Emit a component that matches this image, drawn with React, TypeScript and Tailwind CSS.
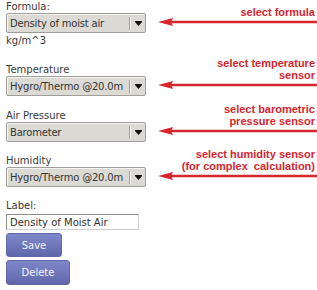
import React from "react";

const RED = "#d7262e";

function Arrow() {
  return (
    <svg width="159" height="8" viewBox="0 0 159 8" className="block shrink-0">
      <line x1="12" y1="4" x2="159" y2="4" stroke={RED} strokeWidth="2.6" />
      <polygon points="0,4 15,0 13,4 15,8" fill={RED} />
    </svg>
  );
}

function Select({ value }: { value: string }) {
  return (
    <div className="flex h-[20px] w-[140px] items-center rounded-[2px] border border-[#9f9e9a] bg-[#dcdad5] shadow-[inset_1px_1px_0_#f5f4f2]">
      <span className="flex-1 overflow-hidden whitespace-nowrap pl-[3px] text-[10px] leading-[13px] tracking-[-0.2px] text-[#333]">
        {value}
      </span>
      <div className="h-[13px] w-px shrink-0 bg-[#9f9e9a]" />
      <div className="h-[13px] w-px shrink-0 bg-[#f5f4f2]" />
      <div className="flex w-[14px] shrink-0 items-center justify-center">
        <svg width="7" height="5" viewBox="0 0 7 5" className="block">
          <rect x="0" y="0" width="7" height="1" fill="#111" />
          <polygon points="0,1 7,1 3.5,5" fill="#111" />
        </svg>
      </div>
    </div>
  );
}

function Note({ lines }: { lines: string[] }) {
  return (
    <div className="ml-[12px] flex h-[33px] w-[159px] flex-col justify-end pb-[7px]">
      {lines.map((l) => (
        <div
          key={l}
          className="shrink-0 pr-[2px] text-right text-[11px] font-bold leading-[12px] whitespace-pre"
          style={{ color: RED, fontFamily: '"Liberation Sans", Arial, sans-serif' }}
        >
          {l}
        </div>
      ))}
      <Arrow />
    </div>
  );
}

function Group({ label, value, note, className }: { label: string; value: string; note: string[]; className?: string }) {
  return (
    <div className={"flex items-start " + (className ?? "")}>
      <div className="w-[140px]">
        <div className="h-[13px] text-[10px] leading-[13px] text-[#3a3a3a]">{label}</div>
        <Select value={value} />
      </div>
      <Note lines={note} />
    </div>
  );
}

export default function App() {
  return (
    <div
      className="h-[290px] w-[317px] overflow-hidden bg-white pl-[6px]"
      style={{ fontFamily: '"DejaVu Sans", Verdana, sans-serif' }}
    >
      <Group label="Formula:" value="Density of moist air" note={["select formula"]} />
      <div className="mt-[1px] h-[13px] text-[10px] leading-[13px] text-[#3a3a3a]">kg/m^3</div>
      <Group
        className="mt-[16px]"
        label="Temperature"
        value="Hygro/Thermo @20.0m"
        note={["select temperature", "sensor"]}
      />
      <Group
        className="mt-[13px]"
        label="Air Pressure"
        value="Barometer"
        note={["select barometric", "pressure sensor"]}
      />
      <Group
        className="mt-[12px]"
        label="Humidity"
        value="Hygro/Thermo @20.0m"
        note={["select humidity sensor", "(for complex  calculation)"]}
      />
      <div className="mt-[12px] h-[13px] text-[10px] leading-[13px] text-[#3a3a3a]">Label:</div>
      <div className="mt-[2px] flex h-[16px] w-[133px] items-center border border-[#8e8e8e] border-r-[#d0d0d0] border-b-[#d0d0d0] bg-white">
        <span className="pl-[3px] text-[10px] leading-[13px] text-[#2f2f2f]">Density of Moist Air</span>
      </div>
      <button className="mt-[3px] block h-[24px] w-[56px] rounded-[3px] border border-[#6068a8] bg-linear-to-b from-[#7f86c8] via-[#7078bb] to-[#5f67ab] text-[10px] text-[#f4f4fa]">
        Save
      </button>
      <button className="mt-[3px] block h-[25px] w-[64px] rounded-[3px] border border-[#6068a8] bg-linear-to-b from-[#7f86c8] via-[#7078bb] to-[#5f67ab] text-[10px] text-[#f4f4fa]">
        Delete
      </button>
    </div>
  );
}
